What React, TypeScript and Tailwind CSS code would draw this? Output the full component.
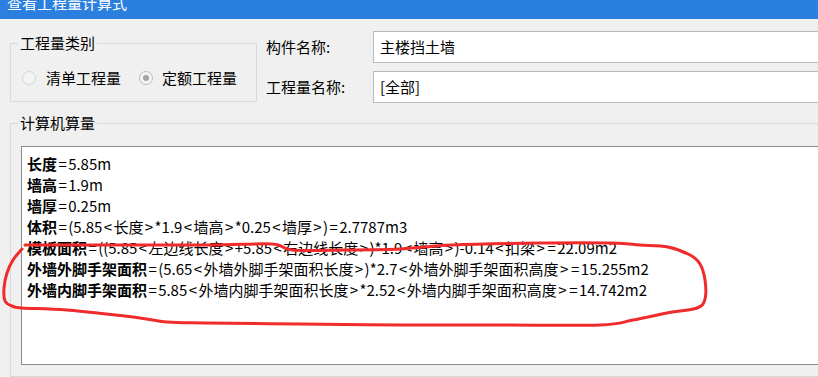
import React from "react";

type Line = { key: string; value: string };

const lines: Line[] = [
  { key: "长度", value: "=5.85m" },
  { key: "墙高", value: "=1.9m" },
  { key: "墙厚", value: "=0.25m" },
  { key: "体积", value: "=(5.85<长度>*1.9<墙高>*0.25<墙厚>)=2.7787m3" },
  { key: "模板面积", value: "=((5.85<左边线长度>+5.85<右边线长度>)*1.9<墙高>)-0.14<扣梁>=22.09m2" },
  { key: "外墙外脚手架面积", value: "=(5.65<外墙外脚手架面积长度>)*2.7<外墙外脚手架面积高度>=15.255m2" },
  { key: "外墙内脚手架面积", value: "=5.85<外墙内脚手架面积长度>*2.52<外墙内脚手架面积高度>=14.742m2" },
];

// hand-drawn circle around the last lines
const markPoints: [number, number][] = [
  [25, 245], [110, 245], [210, 245], [272, 244], [292, 250], [345, 250], [400, 249],
  [452, 245], [540, 243], [612, 243], [640, 245], [668, 247], [690, 255], [700, 264],
  [705, 280], [705, 299], [697, 308], [667, 313], [633, 320], [600, 325], [500, 325],
  [400, 325], [300, 324], [205, 323], [167, 322], [133, 317], [67, 310], [22, 308],
  [12, 306], [5, 301], [4, 288], [7, 273], [13, 260], [22, 249],
];

function smoothPath(pts: [number, number][]) {
  let d = `M ${pts[0][0]} ${pts[0][1]}`;
  for (let i = 0; i < pts.length - 1; i++) {
    const p0 = pts[i - 1] ?? pts[i];
    const p1 = pts[i];
    const p2 = pts[i + 1];
    const p3 = pts[i + 2] ?? p2;
    const c1x = p1[0] + (p2[0] - p0[0]) / 6;
    const c1y = p1[1] + (p2[1] - p0[1]) / 6;
    const c2x = p2[0] - (p3[0] - p1[0]) / 6;
    const c2y = p2[1] - (p3[1] - p1[1]) / 6;
    d += ` C ${c1x} ${c1y} ${c2x} ${c2y} ${p2[0]} ${p2[1]}`;
  }
  return d;
}

// the original font gives < > = wide side bearings
function Formula({ text }: { text: string }) {
  const parts = text.split(/([<>=])/);
  return (
    <>
      {parts.map((part, i) =>
        part === "<" || part === ">" || part === "=" ? (
          <span key={i} className="px-[1.4px]">
            {part}
          </span>
        ) : (
          <span key={i}>{part}</span>
        ),
      )}
    </>
  );
}

function Radio({ checked }: { checked?: boolean }) {
  return (
    <span
      className={
        checked
          ? "flex size-[14px] items-center justify-center rounded-full border border-[#bcbcbc] bg-[#f4f4f4]"
          : "flex size-[14px] items-center justify-center rounded-full border border-[#d6d6d6] bg-[#f4f4f4]"
      }
    >
      {checked ? <span className="size-[6px] rounded-full bg-[#a3a3a3]" /> : null}
    </span>
  );
}

export default function App() {
  return (
    <div
      className="relative h-[377px] w-[818px] overflow-hidden bg-[#f0f0f0] text-[15px] text-black"
      style={{ fontFamily: '"Noto Sans CJK SC", "Noto Sans", sans-serif' }}
    >
      <div className="h-[19px] overflow-hidden bg-[#2b7fde] pl-[7px] text-white">
        <div className="-mt-[5px] leading-[15px]">查看工程量计算式</div>
      </div>

      <div className="flex">
        <fieldset className="ml-[10px] mt-[16px] h-[67px] w-[247px] shrink-0 border border-[#d9d9d9]">
          <legend className="ml-[7px] px-[2px] leading-[16px]">工程量类别</legend>
          <div className="mt-[19px] flex h-[16px] items-center pl-[11px] leading-[16px]">
            <Radio />
            <span className="ml-[10px]">清单工程量</span>
            <span className="ml-[18px]">
              <Radio checked />
            </span>
            <span className="ml-[9px]">定额工程量</span>
          </div>
        </fieldset>

        <div className="ml-[9px] mt-[12px] flex shrink-0 flex-col gap-[8px]">
          <div className="flex items-center">
            <span className="w-[107px]">构件名称:</span>
            <div className="flex h-[32px] w-[460px] items-center border border-[#b9b9b9] bg-white pl-[6px]">
              主楼挡土墙
            </div>
          </div>
          <div className="flex items-center">
            <span className="w-[107px]">工程量名称:</span>
            <div className="flex h-[32px] w-[460px] items-center border border-[#b9b9b9] bg-white pl-[6px]">
              [全部]
            </div>
          </div>
        </div>
      </div>

      <fieldset className="ml-[10px] mt-[12px] h-[262px] w-[840px] border border-[#d9d9d9]">
        <legend className="ml-[7px] px-[2px] leading-[16px]">计算机算量</legend>
        <div className="ml-[10px] mt-[15px] h-[219px] border border-[#8c8c8c] bg-white pl-[5px] pt-[6px] leading-[21px] whitespace-nowrap">
          {lines.map((line) => (
            <div key={line.key}>
              <span className="font-bold">{line.key}</span>
              <Formula text={line.value} />
            </div>
          ))}
        </div>
      </fieldset>

      <svg
        className="pointer-events-none absolute left-0 top-0"
        width="818"
        height="377"
        viewBox="0 0 818 377"
      >
        <path
          d={smoothPath(markPoints)}
          fill="none"
          stroke="#ef2b2b"
          strokeWidth="3"
          strokeLinecap="round"
          strokeLinejoin="round"
        />
      </svg>
    </div>
  );
}
